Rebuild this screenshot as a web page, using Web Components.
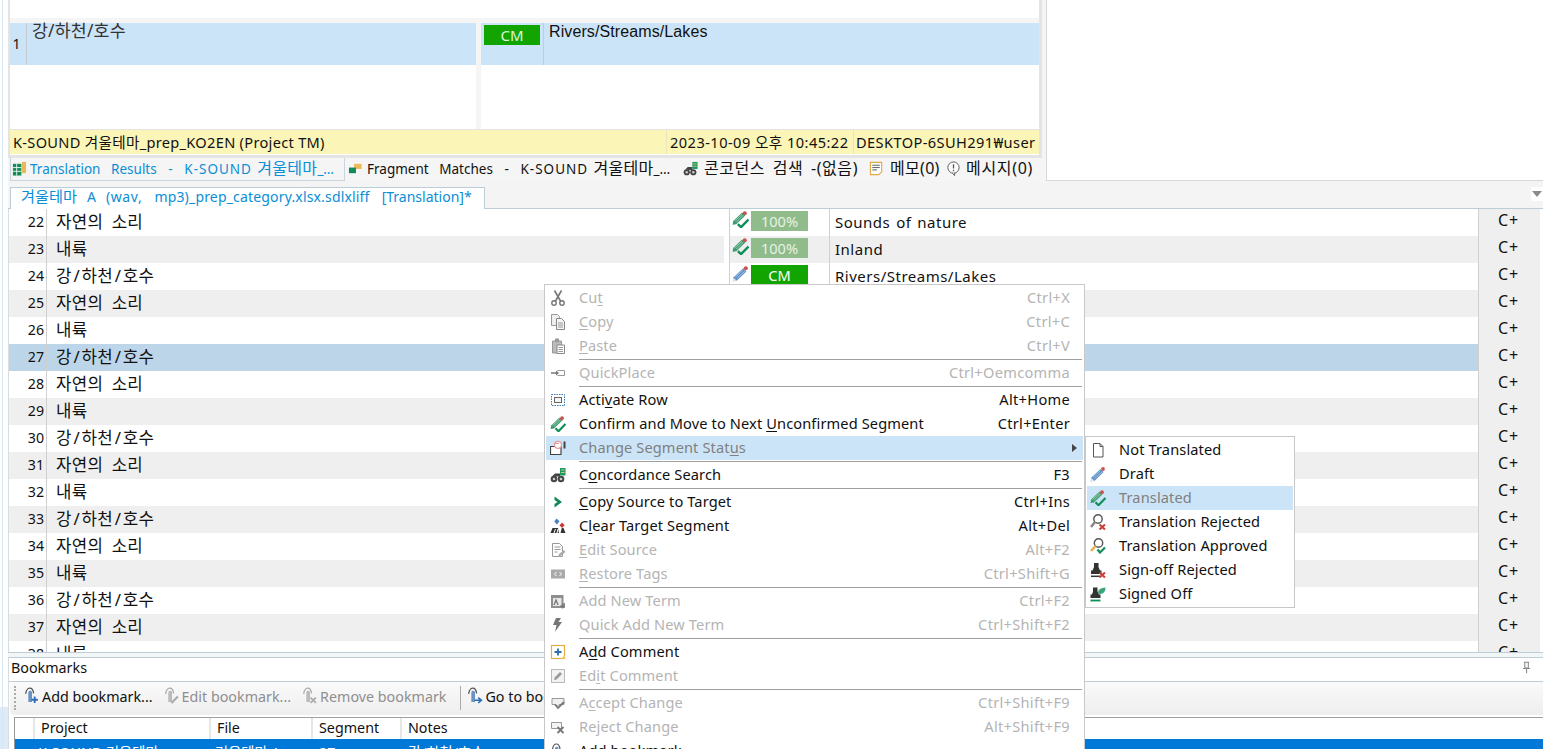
<!DOCTYPE html>
<html lang="ko"><head><meta charset="utf-8"><title>Trados</title>
<style>
html,body{margin:0;padding:0;overflow:hidden;background:#fff}
body{font-family:"Noto Sans","Noto Sans CJK KR",sans-serif;font-size:14px;color:#111}
u{text-underline-offset:2px;text-decoration-thickness:1px}
</style></head><body>
<x-app>
  <x-compare-panel slot="compare"></x-compare-panel>
  <x-result-tabs slot="tabs"></x-result-tabs>
  <x-doc-tabs slot="doc"></x-doc-tabs>
  <x-seg-grid slot="grid"></x-seg-grid>
  <x-bookmarks slot="bookmarks"></x-bookmarks>
  <x-menu slot="overlay" id="ctx">
    <x-menu-item icon="cut" key="Ctrl+X" disabled>Cu<u>t</u></x-menu-item>
    <x-menu-item icon="copy" key="Ctrl+C" disabled><u>C</u>opy</x-menu-item>
    <x-menu-item icon="paste" key="Ctrl+V" disabled><u>P</u>aste</x-menu-item>
    <x-menu-sep></x-menu-sep>
    <x-menu-item icon="quick" key="Ctrl+Oemcomma" disabled>QuickPlace</x-menu-item>
    <x-menu-sep></x-menu-sep>
    <x-menu-item icon="activate" key="Alt+Home">Acti<u>v</u>ate Row</x-menu-item>
    <x-menu-item icon="confirm" key="Ctrl+Enter">Confirm and Move to Next <u>U</u>nconfirmed Segment</x-menu-item>
    <x-menu-item icon="change" hot arrow disabled>Change Segment Stat<u>u</u>s</x-menu-item>
    <x-menu-sep></x-menu-sep>
    <x-menu-item icon="conc" key="F3">C<u>o</u>ncordance Search</x-menu-item>
    <x-menu-sep></x-menu-sep>
    <x-menu-item icon="chev" key="Ctrl+Ins"><u>C</u>opy Source to Target</x-menu-item>
    <x-menu-item icon="clear" key="Alt+Del">C<u>l</u>ear Target Segment</x-menu-item>
    <x-menu-item icon="editsrc" key="Alt+F2" disabled><u>E</u>dit Source</x-menu-item>
    <x-menu-item icon="restore" key="Ctrl+Shift+G" disabled><u>R</u>estore Tags</x-menu-item>
    <x-menu-sep></x-menu-sep>
    <x-menu-item icon="addterm" key="Ctrl+F2" disabled>Add New Term</x-menu-item>
    <x-menu-item icon="bolt" key="Ctrl+Shift+F2" disabled>Quick Add New Term</x-menu-item>
    <x-menu-sep></x-menu-sep>
    <x-menu-item icon="addcomment">A<u>d</u>d Comment</x-menu-item>
    <x-menu-item icon="editcomment" disabled>Ed<u>i</u>t Comment</x-menu-item>
    <x-menu-sep></x-menu-sep>
    <x-menu-item icon="accept" key="Ctrl+Shift+F9" disabled>A<u>c</u>cept Change</x-menu-item>
    <x-menu-item icon="reject" key="Alt+Shift+F9" disabled>Reject Change</x-menu-item>
    <x-menu-item icon="bookmark">Add bookmark</x-menu-item>
  </x-menu>
  <x-menu slot="overlay" id="sub" compact>
    <x-menu-item compact icon="doc">Not Translated</x-menu-item>
    <x-menu-item compact icon="draft">Draft</x-menu-item>
    <x-menu-item compact icon="confirm" hot disabled>Translated</x-menu-item>
    <x-menu-item compact icon="rej">Translation Rejected</x-menu-item>
    <x-menu-item compact icon="appr">Translation Approved</x-menu-item>
    <x-menu-item compact icon="signrej">Sign-off Rejected</x-menu-item>
    <x-menu-item compact icon="signed">Signed Off</x-menu-item>
  </x-menu>
</x-app>
<script>
const ICONS={
cut:'<circle cx="4" cy="13" r="2.200" fill="none" stroke="#777" stroke-width="1.400"/><circle cx="12" cy="13" r="2.200" fill="none" stroke="#777" stroke-width="1.400"/><path d="M5.500 11 11.500 .5M10.500 11 4.500 .5" stroke="#777" stroke-width="1.600" fill="none"/>',
copy:'<path d="M1.500 .5h6l2 2v9h-8z" fill="#eee" stroke="#999"/><path d="M6.500 4.500h5l3 3v8h-8z" fill="#f4f4f4" stroke="#888"/><path d="M8 9h5M8 11h5M8 13h5" stroke="#999"/>',
paste:'<path d="M2.500 3h9v12h-9z" fill="#bbb" stroke="#999"/><path d="M5 .5h4v3.500H5z" fill="#999"/><path d="M7 7h7.500v8.500H7z" fill="#fff" stroke="#888"/><path d="M8.500 9.500h4.500M8.500 11.500h4.500M8.500 13.500h4.500" stroke="#999"/>',
quick:'<path d="M7.500 5.500h7v5h-7" fill="#fff" stroke="#999"/><path d="M1 8h7" stroke="#777" stroke-width="1.500"/><path d="M6 5.500 9 8l-3 2.500z" fill="#777"/>',
activate:'<rect x="1.500" y="2.500" width="13" height="11" fill="none" stroke="#3c78b4" stroke-dasharray="1.500 1"/><rect x="4.500" y="5.500" width="7" height="5" fill="#f4f4f4" stroke="#666"/>',
confirm:'<path d="M.5 13 1.200 9.500 9.500 1.500l3 2.800L4 12.500z" fill="#3d9a6d"/><path d="M2.500 9.500 9.500 3M4 10.500 10.500 4" stroke="#bfe3d0" stroke-width=".7"/><circle cx="12" cy="2.200" r="1.900" fill="#c9524d"/><path d="M5.500 12.300 8.500 15.200 15.500 8" fill="none" stroke="#0d8f58" stroke-width="2.200"/>',
draft:'<path d="M.7 15.500 1.500 11.500 10.500 3l3 3-8.800 8.700z" fill="#5b8ec8"/><path d="M3 11.500 10.500 4.500M4.500 12.800 12 5.800" stroke="#c8dcf0" stroke-width=".7"/><path d="M.7 15.500 1.500 12l2.800 2.700z" fill="#dfe8f2"/><circle cx="13" cy="3" r="1.900" fill="#c9524d"/>',
change:'<path d="M.5 6.500h10.500v8H.5z" fill="#fff" stroke="#444" stroke-width="1.200"/><path d="M14.500 1.500v7" stroke="#444" stroke-width="2"/><circle cx="8" cy="4.800" r="3.500" fill="#fff" stroke="#e59a96" stroke-width="1.300"/><path d="M4 3.500h5" stroke="#e59a96"/>',
conc:'<circle cx="4" cy="12" r="3.300" fill="#444"/><circle cx="11" cy="12" r="3.300" fill="#444"/><circle cx="4" cy="12" r="1.300" fill="#ccc"/><circle cx="11" cy="12" r="1.300" fill="#ccc"/><path d="M2.500 9 5 6.500h5v3H6z" fill="#444"/><rect x="10" y="1" width="5.500" height="7.500" fill="#1a9a63"/><path d="M11 3h3.500M11 5.500h3.500" stroke="#e0c060"/>',
chev:'<path d="M4.500 2.500 12 8l-7.500 5.500V10l3-2-3-2z" fill="#12875a"/>',
clear:'<path d="M.5 15 2.500 10H8l1 5zM10.500 15l1.300-5h1.700L15.500 15z" fill="#333"/><path d="M4 15 5.500 11M7 15 8 11" stroke="#fff"/><path d="M6.500 .5 9.500 3.300 7 6.500 4.200 3.600z" fill="#4a7fc0"/><path d="M12 4.500l2.700 2.700L12 10 9.500 7.200z" fill="#cc3a34"/>',
editsrc:'<path d="M2.500 1.500h7l3 3v10h-10z" fill="#fff" stroke="#999"/><path d="M4.500 5h6M4.500 7.500h6M4.500 10h3" stroke="#999"/><path d="M8 15l1-3 5-4 1.500 2-5 4z" fill="#aaa"/>',
restore:'<rect x="1" y="3.500" width="14" height="9" fill="#aaa"/><path d="M6.500 6 4.500 8l2 2M9.500 6l2 2-2 2" fill="none" stroke="#fff"/>',
addterm:'<path d="M1 2h12.500v8H15v5H1z" fill="#8f8f8f"/><rect x="3" y="5" width="8.500" height="8" fill="#e8e8e8"/><path d="M4 12 6 7l2 5M12.500 11v4.500M10 13.200h5" stroke="#777" fill="none" stroke-width="1.300"/>',
bolt:'<path d="M6 1h5L8.500 5H12L5 15l1.500-7H3z" fill="#777"/>',
addcomment:'<rect x="1.500" y="1.500" width="13" height="13" fill="#fff" stroke="#e4ae45" stroke-width="1.200"/><path d="M11 15 15 11v4z" fill="#f0c060"/><path d="M8 4.500v7M4.500 8h7" stroke="#2b6eb5" stroke-width="1.800"/>',
editcomment:'<rect x="1.500" y="1.500" width="13" height="13" fill="#f2f2f2" stroke="#bbb"/><path d="M4 12l.7-2.500L10 4l2 2-5.500 5.500z" fill="#999"/>',
accept:'<path d="M2 3.500h12v6H9l-2 2-1-2H2z" fill="#f0f0f0" stroke="#999"/><path d="M5 9.500 8 13l6-6" fill="none" stroke="#777" stroke-width="1.800"/>',
reject:'<path d="M1.500 3.500h10v6h-10z" fill="#f4f4f4" stroke="#999"/><path d="M7.500 8 13.500 14M13.500 8 7.500 14" stroke="#777" stroke-width="1.800"/>',
bookmark:'<path d="M5 14V5.500C5 3 8.500 3 8.500 5.500V14z" fill="#6b93c2"/><path d="M2.500 6.500C3 2 5.500 1 6.500 1S9.500 2 10 6" fill="none" stroke="#555" stroke-width="1.200"/><path d="M11 9v6M8 12h6" stroke="#2b6eb5" stroke-width="1.700"/>',
bookmarkE:'<path d="M5 14V5.500C5 3 8.500 3 8.500 5.500V14z" fill="#bbb"/><path d="M2.500 6.500C3 2 5.500 1 6.500 1S9.500 2 10 6" fill="none" stroke="#aaa" stroke-width="1.200"/><path d="M8 15 14 9" stroke="#aaa" stroke-width="2"/>',
bookmarkR:'<path d="M5 14V5.500C5 3 8.500 3 8.500 5.500V14z" fill="#bbb"/><path d="M2.500 6.500C3 2 5.500 1 6.500 1S9.500 2 10 6" fill="none" stroke="#aaa" stroke-width="1.200"/><path d="M9 10l5 5M14 10l-5 5" stroke="#aaa" stroke-width="1.600"/>',
bookmarkG:'<path d="M5 14V5.500C5 3 8.500 3 8.500 5.500V14z" fill="#6b93c2"/><path d="M2.500 6.500C3 2 5.500 1 6.500 1S9.500 2 10 6" fill="none" stroke="#555" stroke-width="1.200"/><path d="M8 12.500h6M11.500 10l3 2.500-3 2.500" fill="none" stroke="#2b6eb5" stroke-width="1.500"/>',
doc:'<path d="M3.500 1.500h6.500l3 3v10.500h-9.500z" fill="#fff" stroke="#555"/><path d="M10 1.500v3h3" fill="none" stroke="#555"/>',
rej:'<circle cx="8" cy="5" r="4.200" fill="#fff" stroke="#555" stroke-width="1.400"/><path d="M5 8 1 13" stroke="#888" stroke-width="2.600"/><path d="M9.500 10.500 15 15.500M15 10.500 9.500 15.500" stroke="#c9403a" stroke-width="2.100"/>',
appr:'<circle cx="8.500" cy="5" r="4.200" fill="#fff" stroke="#555" stroke-width="1.400"/><path d="M5.500 8 1 13" stroke="#e6b050" stroke-width="2.600"/><path d="M7.500 11.500 10 14.500 15 9.500" fill="none" stroke="#0d8f58" stroke-width="2.200"/>',
signrej:'<path d="M4 1h4.500v4L10 8.500h1.500v3.500H1V8.500h1.500L4 5z" fill="#333"/><path d="M1 14.300h9" stroke="#333" stroke-width="1.500"/><path d="M9.500 10.500 15 15.500M15 10.500 9.500 15.500" stroke="#c9403a" stroke-width="2.100"/>',
signed:'<path d="M3 1.500h4.500v4L9 8.500h1.500v3.500H.5V8.500H2L3 5.500z" fill="#333"/><path d="M.5 14.500h10" stroke="#0d8f58" stroke-width="1.800"/><path d="M8 7C8 3 11 2 15.500 1.500 15.500 6 13 8 9.500 8z" fill="#3aa578"/>',
results:'<rect x="1" y="3" width="9" height="12.500" fill="#118c55"/><path d="M1 7h9M1 11h9M5 3v12.500" stroke="#fff" stroke-width=".9"/><rect x="10.500" y="1" width="4.500" height="12" fill="#e8b95c"/>',
frag:'<path d="M6.500 3h8v5.500h-8z" fill="#eeb959"/><path d="M1 7h7.500v6H1z" fill="#128a5a"/>',
memo:'<path d="M1.500 1.500h12v10l-3 3h-9z" fill="#fff" stroke="#e2a94a" stroke-width="1.200"/><path d="M3.500 4.500h8M3.500 7h8M3.500 9.500h5" stroke="#555"/>',
msg:'<circle cx="8" cy="7" r="6" fill="#fff" stroke="#555"/><path d="M8 3.500V8M8 9.300v1.500" stroke="#555" stroke-width="1.400"/><path d="M7 13l2 2.500 .5-3" fill="#fff" stroke="#555"/>',
pin:'<path d="M4.500 1.500h6M5.500 2v6h4V2M3.500 8.500h8M7.500 9v5" fill="none" stroke="#888" stroke-width="1.200"/>'
};
function def(name,css,html,init){
  customElements.define(name,class extends HTMLElement{
    constructor(){super();this.attachShadow({mode:'open'}).innerHTML='<style>'+css+'</style>'+(html||'');}
    connectedCallback(){if(init&&!this._i){this._i=1;init.call(this);}}
  });
}
def('x-icon',':host{display:inline-flex;width:var(--s,16px);height:var(--s,16px);flex:none}svg{width:100%;height:100%;display:block}','',function(){
  this.shadowRoot.innerHTML+='<svg viewBox="0 0 16 16" aria-hidden="true">'+(ICONS[this.getAttribute('name')]||'')+'</svg>';
});
def('x-app',`:host{display:block;position:relative;width:1543px;height:749px;overflow:hidden;background:#fff;box-sizing:border-box;padding-left:8px;
  background-image:linear-gradient(#d6e6f3,#d6e6f3),linear-gradient(#dcebf7,#dcebf7);background-size:1px 100%,8px 42px;background-position:2px 0,0 100%;background-repeat:no-repeat}
 .upper{display:flex;height:181px}
 .left{width:1038px;flex:none;background:#f5f5f5}
 .right{flex:1;background:#fff;border-left:1px solid #d8d8d8;border-bottom:1px solid #d8d8d8}
 .band{height:6px;background:#f3f6f7;border-top:1px solid #bccdd8;border-bottom:1px solid #bccdd8;box-sizing:border-box}`,
 `<div class="upper"><div class="left"><slot name="compare"></slot><slot name="tabs"></slot></div><div class="right"></div></div>
  <slot name="doc"></slot><slot name="grid"></slot><div class="band"></div><slot name="bookmarks"></slot><slot name="overlay"></slot>`);
def('x-compare-panel',`:host{display:block;height:158px;box-sizing:border-box;width:1034px;background:#fff;border-left:2px solid #e4e4e4;border-right:3px solid #e4e4e4;border-bottom:3px solid #e4e4e4;font-size:14.6px}
 .head{height:18px}
 .strip{height:5px;background:#f5f5f5}
 .body{display:grid;grid-template-columns:466px 5px 1fr;height:106px}
 .gap{background:#f5f5f5}
 .a,.b{height:42px;background:#cce4f7;display:flex}
 .n{width:17px;border-right:1px solid #c4ccd2;text-align:center;padding:11px 3px 0 0;box-sizing:border-box;font-size:14px;line-height:20px}
 .ko{padding-left:5px;letter-spacing:.2px;color:#333;flex:1;font-size:17.300px;line-height:15px}
 .cmw{width:63px;border-right:1px solid #c4ccd2;box-sizing:border-box;padding:2px 3px}
 .cm{width:56px;height:20px;background:#12a502;color:#dff5dd;text-align:center;line-height:21px;font-size:15px}
 .en{font-family:"Liberation Sans",sans-serif;font-size:16px;line-height:18px;padding-left:5px;flex:1;letter-spacing:.1px}
 .st{display:grid;grid-template-columns:656px 1px 186px 1px 1fr;height:25px;background:#fcf5b8;border-top:1px solid #e4e4e4;line-height:24px;white-space:nowrap;letter-spacing:.3px;box-sizing:border-box}
 .st i{background:#e8e4bb}.st span{padding-left:3px;overflow:hidden}`,
 `<div class="head"></div><div class="strip"></div>
 <div class="body"><div><div class="a"><div class="n">1</div><div class="ko">강/하천/호수</div></div></div><div class="gap"></div><div><div class="b"><div class="cmw"><div class="cm">CM</div></div><div class="en">Rivers/Streams/Lakes</div></div></div></div>
 <div class="st"><span>K-SOUND 겨울테마_prep_KO2EN (Project TM)</span><i></i><span style="letter-spacing:.45px">2023-10-09 오후 10:45:22</span><i></i><span style="letter-spacing:.4px;padding-left:2px">DESKTOP-6SUH291₩user</span></div>`);
def('x-result-tabs',`:host{display:flex;height:23px;font-size:13.500px;line-height:20px;white-space:pre;box-sizing:border-box;padding-left:2px;word-spacing:1.800px}
 .t{display:flex;align-items:flex-start;gap:3px;box-sizing:border-box;height:23px;flex:none;overflow:hidden;padding-top:0}
 .on{color:#0a8ed6;border:1px solid #c9d5de;border-top:0;padding-left:1px}
 x-icon{--s:15px;margin-top:3px}
 b{font-weight:400;font-size:16px;word-spacing:3px;letter-spacing:.3px}
 .w{word-spacing:3px;letter-spacing:.55px}
 .y{margin:0 1px}
 s{text-decoration:none;letter-spacing:1px}`,
 `<div class="t on" style="width:335px"><x-icon name="results"></x-icon><span>Translation  Results  <span class="y">-</span>  <s>K-SOUND</s> <b>겨울테마</b>_…</span></div>
  <div class="t" style="width:337px;padding-left:3px;gap:4px"><x-icon name="frag"></x-icon><span>Fragment  Matches  <span class="y">-</span>  <s>K-SOUND</s> <b>겨울테마</b>_…</span></div>
  <div class="t" style="width:186px;padding-left:1px;gap:6px"><x-icon name="conc"></x-icon><span><b class="w">콘코던스 검색 -(없음)</b></span></div>
  <div class="t" style="width:78px;gap:6px;padding-left:1px"><x-icon name="memo"></x-icon><span><b>메모(0)</b></span></div>
  <div class="t" style="width:90px;gap:5px"><x-icon name="msg"></x-icon><span><b style="letter-spacing:.7px">메시지(0)</b></span></div>`);
def('x-doc-tabs',`:host{display:flex;height:28px;box-sizing:border-box;background:#f4f4f4;border-bottom:1px solid #bccdd8;padding:6px 0 0 2px;justify-content:space-between;align-items:flex-start}
 .t{height:22px;width:475px;box-sizing:border-box;background:#fff;border:1px solid #bccdd8;border-bottom:0;color:#0a8ed6;font-size:14px;line-height:17px;padding-left:10px;white-space:pre;overflow:hidden;word-spacing:2.400px}
 b{font-weight:400;font-size:15.200px}
 s{text-decoration:none;margin:0 4px}
 em{font-style:normal;letter-spacing:.6px}
 i.m{font-style:normal;letter-spacing:.17px}
 .d{width:12px;height:14px;background:#fff;display:flex;align-items:center;justify-content:center}
 .d i{border:5px solid transparent;border-top:6px solid #8a8a8a;border-bottom:0}`,
 `<div class="t"><b>겨울테마</b> <s>A</s> <em>(wav,</em>  <i class="m">mp3)_prep_category.xlsx.sdlxliff</i>  [Translation]*</div><div class="d"><i></i></div>`);
def('x-seg-row',`:host{display:grid;grid-template-columns:37px 1px 677px 5px 1px 99px 1px 648px 1px 61px;height:27px;line-height:25px;white-space:nowrap}
 .n{text-align:right;padding-right:2px;font-size:14.200px}
 .s{padding-left:9px;font-size:16.800px;word-spacing:4px;overflow:hidden;letter-spacing:.25px}
 .s i{font-style:normal;margin:0 1.700px}
 .l{background:#d0d0d0}
 .g{background:#fff}
 .b,.s,.n,.t{background:var(--bg,#fff)}
 .b{display:flex;align-items:center;padding-left:2px;gap:2px;box-sizing:border-box}
 .t{padding-left:5px;font-size:15px;letter-spacing:.5px;word-spacing:1.500px;line-height:26px}
 .c{background:#efefef;padding-left:19px;font-size:16px;letter-spacing:1px;color:#111;line-height:22px;box-sizing:border-box}
 .m{width:57px;height:20px;line-height:20px;text-align:center;font-size:14.600px;margin-top:-3px}
 x-icon{--s:17px;margin-top:-7px}`,'',function(){
  const a=k=>this.getAttribute(k)||'',st=a('status'),sel=this.hasAttribute('sel'),alt=+a('num')%2==1;
  this.style.setProperty('--bg',sel?'#bdd5e9':alt?'#efefef':'#fff');
  let badge='';
  if(st){const g=st=='CM';badge='<x-icon name="'+(g?'draft':'confirm')+'"></x-icon><div class="m" style="background:'+(g?'#12a502':'#90bb8b')+';color:'+(g?'#fff':'#e6f3e4')+'">'+st+'</div>';}
  this.shadowRoot.innerHTML+='<div class="n">'+a('num')+'</div><div class="l"></div><div class="s">'+a('src').replace(/\//g,'<i>/</i>')+'</div><div class="g"></div><div class="l"></div><div class="b">'+badge+'</div><div class="l"></div><div class="t">'+a('tgt')+'</div><div class="l"></div><div class="c">C+</div>';
});
def('x-seg-grid',`:host{display:block;height:443px;overflow:hidden;border-left:1px solid #d8dde0;box-sizing:border-box}`,'',function(){
  const src=['자연의 소리','내륙','강/하천/호수'],tg={22:['100%','Sounds of nature'],23:['100%','Inland'],24:['CM','Rivers/Streams/Lakes']};
  for(let n=22;n<=38;n++){
    const r=document.createElement('x-seg-row');
    r.setAttribute('num',n);r.setAttribute('src',src[(n-22)%3]);
    if(tg[n]){r.setAttribute('status',tg[n][0]);r.setAttribute('tgt',tg[n][1]);}
    if(n==27)r.setAttribute('sel','');
    this.shadowRoot.appendChild(r);
  }
});
def('x-bookmarks',`:host{display:block;font-size:14.300px;border-left:1px solid #d8dde0;box-sizing:border-box}
 .h{height:24px;box-sizing:border-box;border-bottom:1px solid #bccdd8;line-height:20px;padding:0 9px 0 2px;display:flex;justify-content:space-between;align-items:flex-start}
 .h x-icon{--s:14px;margin-top:3px}
 .tb{height:33px;margin-left:1px;border-radius:5px 0 0 5px;background:linear-gradient(#fafafa,#eeeeee);display:flex;align-items:flex-start;padding:4px 0 0 4px;box-sizing:border-box;white-space:nowrap;line-height:22px}
 .grip{width:2px;height:24px;border-left:2px dotted #aaa;margin-right:5px}
 .btn{display:flex;align-items:flex-start;gap:2px;margin-right:10px}
 .btn x-icon{--s:17px;margin-top:1px}
 .dis{color:#8f8f8f}
 .sp{width:1px;height:24px;background:#aaa;margin:0 5px 0 4px}
 .tbl{margin:2px 0 0 5px;border-top:1px solid #a0a0a0}
 .r{display:grid;grid-template-columns:20px 176px 102px 89px 1fr;height:21px;line-height:20px;border-left:1px solid #999}
 .r>div{padding-left:6px;box-sizing:border-box}
 .hd>div{border-right:2px solid #e6e6e6}
 .hd>div:last-child{border:0}
 .blue{background:#0078d7;color:#fff;height:30px;line-height:21px;padding-top:3px;box-sizing:content-box}`,
 `<div class="h"><span>Bookmarks</span><x-icon name="pin"></x-icon></div>
  <div class="tb"><i class="grip"></i>
   <div class="btn"><x-icon name="bookmark"></x-icon><span>Add bookmark...</span></div>
   <div class="btn dis"><x-icon name="bookmarkE"></x-icon><span>Edit bookmark...</span></div>
   <div class="btn dis"><x-icon name="bookmarkR"></x-icon><span>Remove bookmark</span></div>
   <i class="sp"></i>
   <div class="btn"><x-icon name="bookmarkG"></x-icon><span>Go to bookmark</span></div>
  </div>
  <div class="tbl"><div class="r hd"><div></div><div>Project</div><div>File</div><div>Segment</div><div>Notes</div></div>
  <div class="r blue"><div></div><div style="padding-left:3px">K-SOUND 겨울테마</div><div style="padding-left:4px">겨울테마 A</div><div>27</div><div>강/하천/호수</div></div></div>`);
def('x-menu',`:host{position:absolute;display:block;background:#fff;border:1px solid #c8c8c8;box-sizing:border-box;padding:1px;font-size:14.600px;letter-spacing:.12px;z-index:5}
 :host(#ctx){left:544px;top:284px;width:541px}
 :host(#sub){left:1085px;top:436px;width:210px}`,'<slot></slot>');
def('x-menu-sep',`:host{display:block;height:3px;box-sizing:border-box;padding:1px 1px 1px 33px}
 i{display:block;height:1px;background:#a0a0a0}`,'<i></i>');
def('x-menu-item',`:host{display:flex;height:24px;line-height:21px;align-items:center;white-space:nowrap;color:#111}
 :host([disabled]){color:#b4b4b4}
 :host([hot]){background:#cce4f7;color:#808080}
 .i{width:28px;padding-left:4px;box-sizing:border-box;display:flex;flex:none}
 :host([compact]) .i{width:32px;padding-left:3px}
 .x{flex:1;padding-left:5px;padding-bottom:2px}
 :host([compact]) .x{padding-left:0}
 .k{padding:0 13px 2px 0;flex:none;letter-spacing:.3px}
 .a{width:0;height:0;border:4px solid transparent;border-left:5px solid #444;border-right:0;margin-right:6px}`,'',function(){
  const s=this.shadowRoot,k=this.getAttribute('key');
  s.innerHTML+='<div class="i"><x-icon name="'+this.getAttribute('icon')+'"></x-icon></div><div class="x"><slot></slot></div>'+(k?'<div class="k">'+k+'</div>':'')+(this.hasAttribute('arrow')?'<i class="a"></i>':'');
});
</script>
</body></html>
